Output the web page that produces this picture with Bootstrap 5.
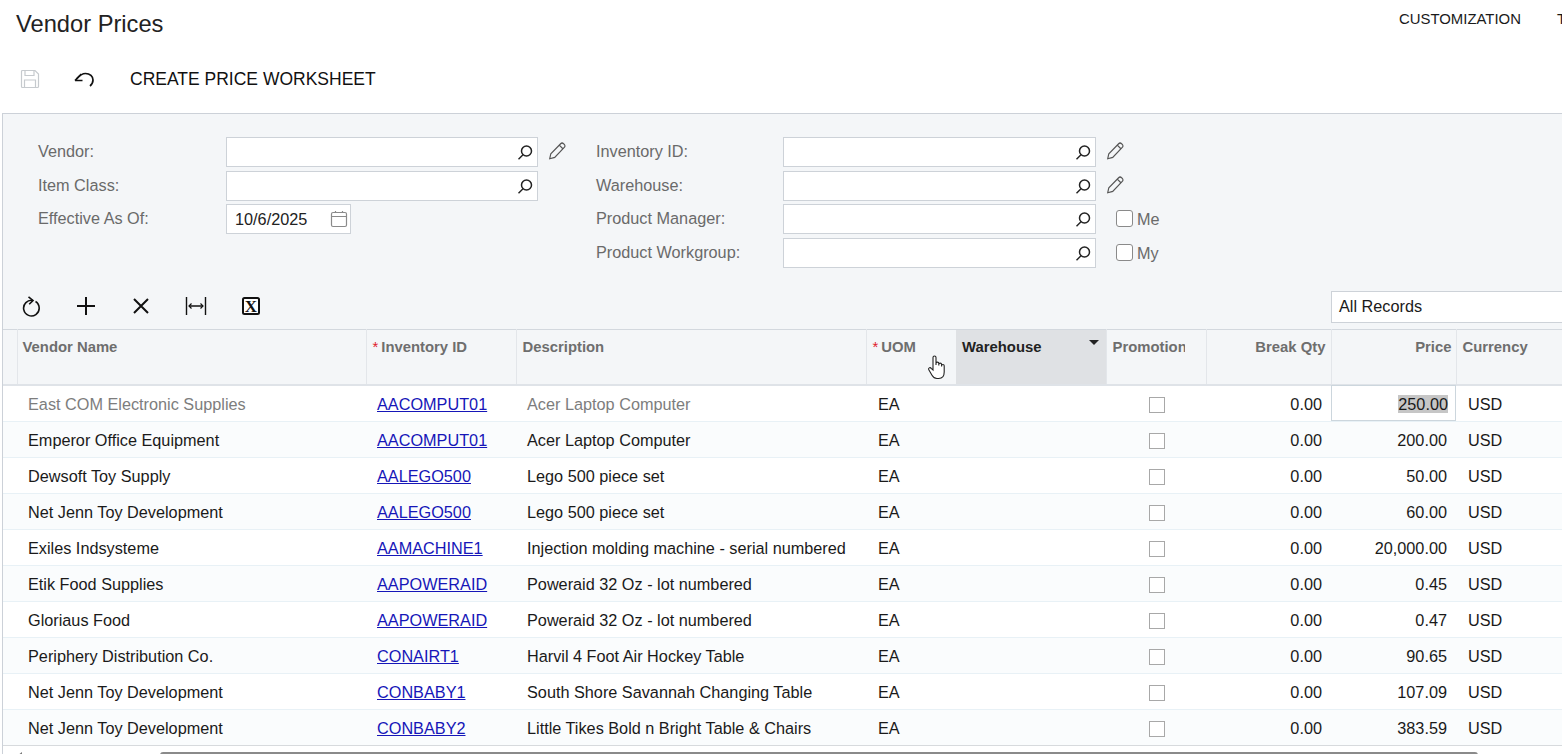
<!DOCTYPE html>
<html lang="en">
<head>
<meta charset="utf-8">
<title>Vendor Prices</title>
<link href="https://cdn.jsdelivr.net/npm/bootstrap@5.3.0/dist/css/bootstrap.min.css" rel="stylesheet">
<style>
html,body{height:754px;overflow:hidden}
body{font-family:"Liberation Sans",Arial,sans-serif;font-size:16.25px;color:#1a1a1a;background:#fff}
.top-bar{height:48px;padding-left:16px}
.page-title{font-size:23.7px;font-weight:400;line-height:28px;margin:10px 0 0;color:#222}
.top-links{width:163px;height:38px;overflow:hidden;white-space:nowrap;font-size:14.9px;line-height:38px;gap:36px;color:#1a1a1a}
.cmd-bar{height:65px;padding-left:19px;padding-bottom:3px}
.cmd-icon{width:22px;height:22px;display:block}
.cmd-slot{width:55px}
.cmd-text{font-size:17.5px;margin-left:1px;color:#111}
.filter-panel{margin-left:2px;background:#f4f6f8;border-top:1px solid #ccd1d8;border-left:1px solid #ccd1d8;height:641px;overflow:hidden}
.filter-form{padding:23px 0 0 35px;height:165px}
.form-col-a{width:558px}
.form-col-b{width:auto}
.field-row{height:33.7px;display:flex;align-items:flex-start}
.field-label{color:#6a6a6a;line-height:29px;flex:none}
.col-a-label{width:188px}
.col-b-label{width:187px}
.lookup{width:312px;height:30px;background:#fff;border:1px solid #cdd2d8;flex:none;position:relative}
.form-col-b .lookup{width:313px}
.lookup.date-box{width:125px;padding-left:8px;line-height:28px;color:#222}
.lookup svg{position:absolute;right:2px;top:5px}
.lookup.date-box svg{right:1px;top:4px}
.side-icon{margin:4px 0 0 9px;flex:none}
.check-box{width:17px;height:17px;border:1.5px solid #8a8a8a;border-radius:3px;margin:6px 4px 0 20px;background:#fff;flex:none}
.check-text{color:#6a6a6a;line-height:31px}
.grid-tools{height:50px;padding-left:17px;padding-top:4px}
.tool-slot{width:55px}
.records-box{position:absolute;left:1331px;top:291px;width:260px;height:32px;background:#fff;border:1px solid #cdd2d8;padding-left:7px;line-height:29px}
.vendor-table{table-layout:fixed;width:1559px;margin:0;border-top:1px solid #d3d8de;--bs-table-bg:transparent}
.vendor-table th{height:55px;vertical-align:top;font-size:14.85px;font-weight:700;color:#6e6e6e;padding:9px 5px 0 6px;border:0;border-left:1px solid #e3e6ea;border-bottom:2px solid #dfe3e8;white-space:nowrap;overflow:hidden;background:#f4f6f8;line-height:17px}
.vendor-table th.first-gutter{border-left:0}
.vendor-table th.name-head{padding-left:5px}
.vendor-table th.sorted-col{background:#dfe1e4;color:#222;border-left:0;padding-left:6px}
.vendor-table td{height:36px;padding:2px 11px 0;font-size:16.25px;line-height:33px;vertical-align:middle;border:0;border-bottom:1px solid #e8f1f6;white-space:nowrap;background:#fff;color:#1a1a1a}
.vendor-table td.shift-cell{padding-left:12px}
.vendor-table tbody tr:nth-child(even) td{background:#fafcfd}
.vendor-table tbody tr:last-child td{border-bottom:1px solid #d7dadd}
.vendor-table td.dim-cell{color:#7d7d7d}
.vendor-table a{color:#1616b8}
.req{color:#e0202a;font-weight:400;margin-right:3px}
.clip-head{display:inline-block;width:72px;overflow:hidden;vertical-align:top}
.text-num{text-align:right}
.vendor-table td.text-num{padding-right:9px}
.vendor-table th.text-num{padding-right:5px}
.vendor-table th.price-head{padding-right:4px}
.box-cell{text-align:center}
.row-check{display:inline-block;width:16px;height:16px;border:1px solid #a8a8a8;background:#fff;vertical-align:-3px;margin-left:1px}
.vendor-table td.active-cell{outline:1px solid #ccd6dd;outline-offset:-1px;padding-right:8px;background:#fff}
.sel-text{background:#c6c6c6}
.sort-arrow{position:absolute;right:7px;top:10px;width:0;height:0;border-left:5px solid transparent;border-right:5px solid transparent;border-top:5px solid #222}
.hand-cursor{position:absolute;left:60px;top:24px}
.h-scroll{height:8px;background:#fff;position:relative}
.h-thumb{position:absolute;left:157px;width:1318px;top:6px;height:8px;background:#8a8a8a;border-radius:3px}
.h-arrow{position:absolute;left:14px;top:6px;width:0;height:0;border-top:4px solid transparent;border-bottom:4px solid transparent;border-right:5px solid #777}
.xl-letter{font-family:"Liberation Serif",serif;font-weight:700;font-size:17px}
</style>
</head>
<body>
<div class="top-bar d-flex justify-content-between">
  <h1 class="page-title">Vendor Prices</h1>
  <div class="top-links d-flex"><span>CUSTOMIZATION</span><span>TOOLS</span></div>
</div>
<div class="cmd-bar d-flex align-items-center">
  <div class="cmd-slot">
    <svg class="cmd-icon" viewBox="0 0 22 22" fill="none" stroke="#c6cace" stroke-width="1.2"><path d="M2.500 3.500a1 1 0 0 1 1-1h12.500l3.500 3.500v12.500a1 1 0 0 1-1 1h-15a1 1 0 0 1-1-1z"/><path d="M6 2.500v5h9v-5M5.500 19.500v-7.500h11v7.500"/></svg>
  </div>
  <div class="cmd-slot">
    <svg class="cmd-icon" viewBox="0 0 22 22" fill="none" stroke="#111" stroke-width="1.700"><path d="M1 12.500L7.300 6M1 12.500h7.500"/><path d="M2.500 11C5.500 7.500 8 5.500 11.500 5.500c4.500 0 7.500 3 7.500 6.500 0 2.500-1.200 4.500-3 6"/></svg>
  </div>
  <span class="cmd-text">CREATE PRICE WORKSHEET</span>
</div>
<div class="filter-panel">
  <div class="filter-form d-flex">
    <div class="form-col-a">
      <div class="field-row"><span class="field-label col-a-label">Vendor:</span>
        <div class="lookup"><svg width="20" height="20" viewBox="0 0 20 20" fill="none" stroke="#222" stroke-width="1.500"><circle cx="11.500" cy="8" r="5"/><path d="M8 11.800l-4.500 4.500"/></svg></div>
        <svg class="side-icon" width="20" height="20" viewBox="0 0 22 22" fill="none" stroke="#555" stroke-width="1.300"><path d="M3 19.500l1.200-5.500L15 3c1-1 2.200-1 3.200 0l.8.8c1 1 1 2.200 0 3.200L8.500 18z"/><path d="M13.500 4.500l4 4"/></svg>
      </div>
      <div class="field-row"><span class="field-label col-a-label">Item Class:</span>
        <div class="lookup"><svg width="20" height="20" viewBox="0 0 20 20" fill="none" stroke="#222" stroke-width="1.500"><circle cx="11.500" cy="8" r="5"/><path d="M8 11.800l-4.500 4.500"/></svg></div>
      </div>
      <div class="field-row"><span class="field-label col-a-label">Effective As Of:</span>
        <div class="lookup date-box">10/6/2025<svg width="20" height="20" viewBox="0 0 20 20" fill="none" stroke="#8a8a8a" stroke-width="1.200"><rect x="2.500" y="3.500" width="15" height="14" rx="1.500"/><path d="M2.500 7.500h15M6.500 2v2M13.500 2v2"/></svg></div>
      </div>
    </div>
    <div class="form-col-b">
      <div class="field-row"><span class="field-label col-b-label">Inventory ID:</span>
        <div class="lookup"><svg width="20" height="20" viewBox="0 0 20 20" fill="none" stroke="#222" stroke-width="1.500"><circle cx="11.500" cy="8" r="5"/><path d="M8 11.800l-4.500 4.500"/></svg></div>
        <svg class="side-icon" width="20" height="20" viewBox="0 0 22 22" fill="none" stroke="#555" stroke-width="1.300"><path d="M3 19.500l1.200-5.500L15 3c1-1 2.200-1 3.200 0l.8.8c1 1 1 2.200 0 3.200L8.500 18z"/><path d="M13.500 4.500l4 4"/></svg>
      </div>
      <div class="field-row"><span class="field-label col-b-label">Warehouse:</span>
        <div class="lookup"><svg width="20" height="20" viewBox="0 0 20 20" fill="none" stroke="#222" stroke-width="1.500"><circle cx="11.500" cy="8" r="5"/><path d="M8 11.800l-4.500 4.500"/></svg></div>
        <svg class="side-icon" width="20" height="20" viewBox="0 0 22 22" fill="none" stroke="#555" stroke-width="1.300"><path d="M3 19.500l1.200-5.500L15 3c1-1 2.200-1 3.200 0l.8.8c1 1 1 2.200 0 3.200L8.500 18z"/><path d="M13.500 4.500l4 4"/></svg>
      </div>
      <div class="field-row"><span class="field-label col-b-label">Product Manager:</span>
        <div class="lookup"><svg width="20" height="20" viewBox="0 0 20 20" fill="none" stroke="#222" stroke-width="1.500"><circle cx="11.500" cy="8" r="5"/><path d="M8 11.800l-4.500 4.500"/></svg></div>
        <span class="check-box"></span><span class="check-text">Me</span>
      </div>
      <div class="field-row"><span class="field-label col-b-label">Product Workgroup:</span>
        <div class="lookup"><svg width="20" height="20" viewBox="0 0 20 20" fill="none" stroke="#222" stroke-width="1.500"><circle cx="11.500" cy="8" r="5"/><path d="M8 11.800l-4.500 4.500"/></svg></div>
        <span class="check-box"></span><span class="check-text">My</span>
      </div>
    </div>
  </div>
  <div class="grid-tools d-flex align-items-center">
    <div class="tool-slot"><svg class="cmd-icon" viewBox="0 0 22 22" fill="none" stroke="#111" stroke-width="1.600"><path d="M15.500 6.500A7.800 7.800 0 1 1 13 5.500"/><path d="M8.500 1.800l4.500 3.700-3.800 3.700"/></svg></div>
    <div class="tool-slot"><svg class="cmd-icon" viewBox="0 0 22 22" fill="none" stroke="#111" stroke-width="2"><path d="M11 2v18M2 11h18"/></svg></div>
    <div class="tool-slot"><svg class="cmd-icon" viewBox="0 0 22 22" fill="none" stroke="#111" stroke-width="2"><path d="M4 4l14 14M18 4L4 18"/></svg></div>
    <div class="tool-slot"><svg class="cmd-icon" viewBox="0 0 22 22" fill="none" stroke="#111" stroke-width="1.400"><path d="M1.500 2v18M20.500 2v18M4 11h14"/><path d="M6.500 8.500L4 11l2.500 2.500M15.500 8.500L18 11l-2.500 2.500" stroke-width="1.200"/></svg></div>
    <div class="tool-slot"><svg class="cmd-icon" viewBox="0 0 22 22"><rect x="3" y="3" width="16" height="16" rx="1.500" fill="#fff" stroke="#111" stroke-width="2"/><text class="xl-letter" x="11" y="16.500" text-anchor="middle" fill="#111">X</text></svg></div>
  </div>
  <div class="records-box">All Records</div>
  <table class="table vendor-table">
    <colgroup><col style="width:14px"><col style="width:349px"><col style="width:150px"><col style="width:350px"><col style="width:90px"><col style="width:150px"><col style="width:100px"><col style="width:125px"><col style="width:125px"><col style="width:106px"></colgroup>
    <thead><tr>
      <th class="first-gutter"></th>
      <th class="name-head">Vendor Name</th>
      <th><span class="req">*</span>Inventory ID</th>
      <th>Description</th>
      <th class="position-relative"><span class="req">*</span>UOM
        <svg class="hand-cursor" width="20" height="26" viewBox="0 0 20 26" fill="#fff" stroke="#222" stroke-width="1.100"><path d="M6 16V3.500a1.500 1.500 0 0 1 3 0V11V9.500a1.400 1.400 0 0 1 2.800 0V11.500V10.500a1.400 1.400 0 0 1 2.800 0V12.500V11.800a1.300 1.300 0 0 1 2.600 0V18c0 4-2 6.500-5.500 6.500H10c-2.500 0-3.800-1.200-5-3.300L1.800 15.800c-1-1.700 1.300-3 2.400-1.500z"/></svg>
      </th>
      <th class="sorted-col position-relative">Warehouse<span class="sort-arrow"></span></th>
      <th><span class="clip-head">Promotion</span></th>
      <th class="text-num">Break Qty</th>
      <th class="text-num price-head">Price</th>
      <th>Currency</th>
    </tr></thead>
    <tbody>
      <tr><td></td><td class="dim-cell">East COM Electronic Supplies</td><td><a href="#">AACOMPUT01</a></td><td class="dim-cell">Acer Laptop Computer</td><td class="shift-cell">EA</td><td></td><td class="box-cell"><span class="row-check"></span></td><td class="text-num">0.00</td><td class="text-num active-cell"><span class="sel-text">250.00</span></td><td class="shift-cell">USD</td></tr>
      <tr><td></td><td>Emperor Office Equipment</td><td><a href="#">AACOMPUT01</a></td><td>Acer Laptop Computer</td><td class="shift-cell">EA</td><td></td><td class="box-cell"><span class="row-check"></span></td><td class="text-num">0.00</td><td class="text-num">200.00</td><td class="shift-cell">USD</td></tr>
      <tr><td></td><td>Dewsoft Toy Supply</td><td><a href="#">AALEGO500</a></td><td>Lego 500 piece set</td><td class="shift-cell">EA</td><td></td><td class="box-cell"><span class="row-check"></span></td><td class="text-num">0.00</td><td class="text-num">50.00</td><td class="shift-cell">USD</td></tr>
      <tr><td></td><td>Net Jenn Toy Development</td><td><a href="#">AALEGO500</a></td><td>Lego 500 piece set</td><td class="shift-cell">EA</td><td></td><td class="box-cell"><span class="row-check"></span></td><td class="text-num">0.00</td><td class="text-num">60.00</td><td class="shift-cell">USD</td></tr>
      <tr><td></td><td>Exiles Indsysteme</td><td><a href="#">AAMACHINE1</a></td><td>Injection molding machine - serial numbered</td><td class="shift-cell">EA</td><td></td><td class="box-cell"><span class="row-check"></span></td><td class="text-num">0.00</td><td class="text-num">20,000.00</td><td class="shift-cell">USD</td></tr>
      <tr><td></td><td>Etik Food Supplies</td><td><a href="#">AAPOWERAID</a></td><td>Poweraid 32 Oz - lot numbered</td><td class="shift-cell">EA</td><td></td><td class="box-cell"><span class="row-check"></span></td><td class="text-num">0.00</td><td class="text-num">0.45</td><td class="shift-cell">USD</td></tr>
      <tr><td></td><td>Gloriaus Food</td><td><a href="#">AAPOWERAID</a></td><td>Poweraid 32 Oz - lot numbered</td><td class="shift-cell">EA</td><td></td><td class="box-cell"><span class="row-check"></span></td><td class="text-num">0.00</td><td class="text-num">0.47</td><td class="shift-cell">USD</td></tr>
      <tr><td></td><td>Periphery Distribution Co.</td><td><a href="#">CONAIRT1</a></td><td>Harvil 4 Foot Air Hockey Table</td><td class="shift-cell">EA</td><td></td><td class="box-cell"><span class="row-check"></span></td><td class="text-num">0.00</td><td class="text-num">90.65</td><td class="shift-cell">USD</td></tr>
      <tr><td></td><td>Net Jenn Toy Development</td><td><a href="#">CONBABY1</a></td><td>South Shore Savannah Changing Table</td><td class="shift-cell">EA</td><td></td><td class="box-cell"><span class="row-check"></span></td><td class="text-num">0.00</td><td class="text-num">107.09</td><td class="shift-cell">USD</td></tr>
      <tr><td></td><td>Net Jenn Toy Development</td><td><a href="#">CONBABY2</a></td><td>Little Tikes Bold n Bright Table &amp; Chairs</td><td class="shift-cell">EA</td><td></td><td class="box-cell"><span class="row-check"></span></td><td class="text-num">0.00</td><td class="text-num">383.59</td><td class="shift-cell">USD</td></tr>
    </tbody>
  </table>
  <div class="h-scroll"><span class="h-arrow"></span><div class="h-thumb"></div></div>
</div>
<script src="https://cdn.jsdelivr.net/npm/bootstrap@5.3.0/dist/js/bootstrap.bundle.min.js"></script>
</body>
</html>
